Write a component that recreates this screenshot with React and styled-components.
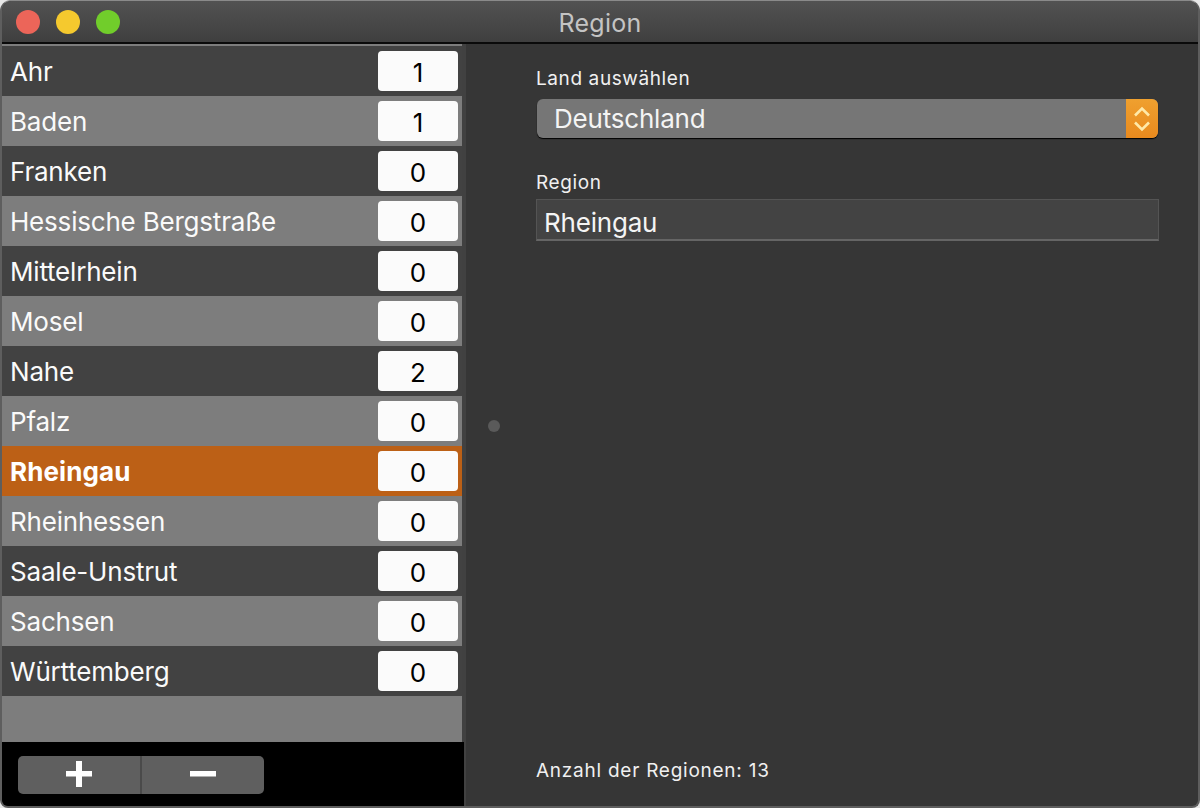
import React from 'react';
import styled, { createGlobalStyle } from 'styled-components';

const GlobalStyle = createGlobalStyle`
  html, body {
    margin: 0;
    padding: 0;
    background: #e8e8e8;
    overflow: hidden;
  }
  * {
    box-sizing: border-box;
  }
`;

const Win = styled.div`
  width: 1200px;
  height: 808px;
  display: flex;
  flex-direction: column;
  border-radius: 11px 11px 8px 8px;
  overflow: hidden;
  background: #363636;
  border: solid #5e5e5e;
  border-top-color: #8a8a8a;
  border-width: 1px 2px 2px 2px;
  font-family: Inter, "Noto Sans", sans-serif;
  color: #f2f2f2;
`;

const TitleBar = styled.div`
  height: 43px;
  flex: none;
  position: relative;
  display: flex;
  align-items: center;
  justify-content: center;
  background: linear-gradient(#525252, #3f3f3f);
  border-bottom: 2px solid #0a0a0a;
  margin: 0 -2px;
  padding-top: 2px;
`;

const Lights = styled.div`
  position: absolute;
  left: 16px;
  top: 9px;
  display: flex;
  gap: 16px;
`;

const Light = styled.span`
  width: 24px;
  height: 24px;
  border-radius: 50%;
  background: ${(p) => p.color};
`;

const Title = styled.div`
  font-size: 25px;
  letter-spacing: 0.3px;
  color: #c4c4c4;
`;

const Body = styled.div`
  flex: 1;
  display: flex;
  min-height: 0;
`;

const Sidebar = styled.div`
  width: 460px;
  flex: none;
  display: flex;
  flex-direction: column;
`;

const List = styled.div`
  flex: 1;
  padding-top: 2px;
  background: #7d7d7d;
`;

const Row = styled.div`
  height: 50px;
  display: flex;
  align-items: center;
  justify-content: space-between;
  padding: 0 4px 0 8px;
  font-size: 26px;
  letter-spacing: ${(p) => (p.$selected ? '0.1px' : '-0.2px')};
  font-weight: ${(p) => (p.$selected ? 700 : 400)};
  color: ${(p) => (p.$selected ? '#ffffff' : '#fafafa')};
  background: ${(p) => (p.$selected ? '#bc6016' : p.$odd ? '#424242' : '#7d7d7d')};
`;

const Count = styled.div`
  width: 80px;
  height: 40px;
  padding-top: 2px;
  border-radius: 4px;
  background: #fbfbfb;
  color: #000;
  font-size: 26px;
  font-weight: 400;
  letter-spacing: 0;
  display: flex;
  align-items: center;
  justify-content: center;
`;

const BottomBar = styled.div`
  position: relative;
  height: 64px;
  flex: none;
  background: #000;
  padding: 12px 16px 0;
  margin-right: -2px;
  border-top: 2px solid #000;
`;

const Buttons = styled.div`
  width: 246px;
  height: 38px;
  display: flex;
  border-radius: 5px;
  overflow: hidden;
  background: #5f5f5f;
`;

const IconButton = styled.div`
  flex: 1;
  display: flex;
  align-items: center;
  justify-content: center;
  padding-bottom: 2px;
  & + & {
    border-left: 2px solid #4a4a4a;
  }
`;

const Splitter = styled.div`
  width: 4px;
  flex: none;
  background: #414141;
`;

const Detail = styled.div`
  flex: 1;
  position: relative;
  display: flex;
  flex-direction: column;
  padding: 24px 40px 24px 70px;
`;

const Dot = styled.span`
  position: absolute;
  left: 22px;
  top: 376px;
  width: 12px;
  height: 12px;
  border-radius: 50%;
  background: #5a5a5a;
`;

const Label = styled.div`
  font-size: 19px;
  line-height: 22px;
  letter-spacing: 0.6px;
  color: #f0f0f0;
`;

const Select = styled.div`
  margin: 9px 0 0 1px;
  height: 39px;
  display: flex;
  align-items: center;
  border-radius: 6px;
  background: #767676;
  box-shadow: 0 1px 1px #000;
  overflow: hidden;
  font-size: 26px;
  letter-spacing: -0.2px;
  color: #f4f4f4;
`;

const SelectText = styled.div`
  flex: 1;
  padding-left: 17px;
`;

const Stepper = styled.div`
  width: 32px;
  height: 100%;
  display: flex;
  align-items: center;
  justify-content: center;
  background: linear-gradient(#efa02f, #e98a1e);
`;

const Field = styled.div`
  margin: 5px -1px 0 0;
  height: 42px;
  display: flex;
  align-items: center;
  padding: 6px 0 0 7px;
  background: #434343;
  border: 1px solid #545454;
  border-bottom: 2px solid #656565;
  font-size: 26px;
  letter-spacing: -0.2px;
  color: #f4f4f4;
`;

const FormGap = styled.div`
  height: 34px;
`;

const Footer = styled.div`
  margin-top: auto;
  font-size: 19px;
  line-height: 22px;
  letter-spacing: 0.75px;
  color: #f0f0f0;
`;

const regions = [
  ['Ahr', 1],
  ['Baden', 1],
  ['Franken', 0],
  ['Hessische Bergstraße', 0],
  ['Mittelrhein', 0],
  ['Mosel', 0],
  ['Nahe', 2],
  ['Pfalz', 0],
  ['Rheingau', 0],
  ['Rheinhessen', 0],
  ['Saale-Unstrut', 0],
  ['Sachsen', 0],
  ['Württemberg', 0],
];

const App = () => {
  return (
    <Win>
      <GlobalStyle />
      <TitleBar>
        <Lights>
          <Light color="#ec6559" />
          <Light color="#f5c92e" />
          <Light color="#71cd2b" />
        </Lights>
        <Title>Region</Title>
      </TitleBar>
      <Body>
        <Sidebar>
          <List>
            {regions.map(([name, count], i) => (
              <Row key={name} $odd={i % 2 === 0} $selected={name === 'Rheingau'}>
                {name}
                <Count>{count}</Count>
              </Row>
            ))}
          </List>
          <BottomBar>
            <Buttons>
              <IconButton>
                <svg width="26" height="26" viewBox="0 0 26 26">
                  <path d="M10 0h6v10h10v5.500H16V26h-6V15.500H0V10h10z" fill="#fff" />
                </svg>
              </IconButton>
              <IconButton>
                <svg width="26" height="26" viewBox="0 0 26 26">
                  <path d="M0 10h26v5.500H0z" fill="#fff" />
                </svg>
              </IconButton>
            </Buttons>
          </BottomBar>
        </Sidebar>
        <Splitter />
        <Detail>
          <Dot />
          <Label>Land auswählen</Label>
          <Select>
            <SelectText>Deutschland</SelectText>
            <Stepper>
              <svg width="16" height="26" viewBox="0 0 16 26" fill="none" stroke="#ffe9a8" strokeWidth="2.6">
                <path d="M1 9.500l7-7 7 7M1 16.500l7 7 7-7" />
              </svg>
            </Stepper>
          </Select>
          <FormGap />
          <Label>Region</Label>
          <Field>Rheingau</Field>
          <Footer>Anzahl der Regionen: 13</Footer>
        </Detail>
      </Body>
    </Win>
  );
};

export default App;
